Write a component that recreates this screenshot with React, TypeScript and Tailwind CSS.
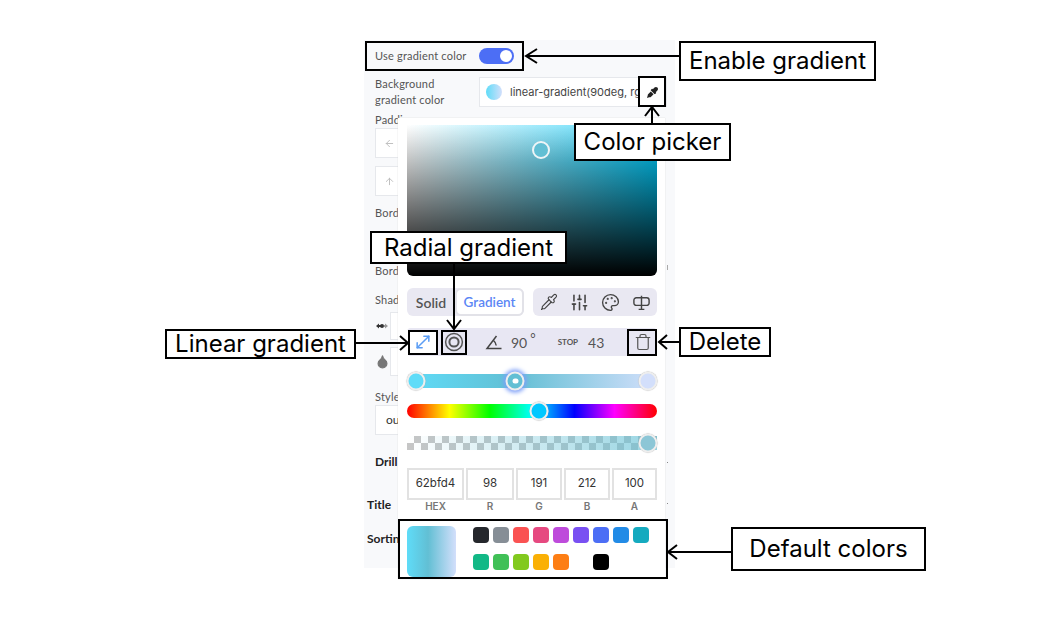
import { MoveDiagonal, Pipette, SlidersVertical, Palette, Trash, Droplet, ArrowLeft, ArrowUp } from 'lucide-react';
import { FaEyeDropper } from 'react-icons/fa';

const swatches = [
  '#25272c', '#868e96', '#fa5252', '#e64980', '#be4bdb', '#7950f2', '#4c6ef5', '#228be6', '#15aabf',
  '#12b886', '#40c057', '#82c91e', '#fab005', '#fd7e14', '#ffffff', '#000000',
];

const fields = [
  { label: 'HEX', value: '62bfd4', width: 'w-[57px]' },
  { label: 'R', value: '98', width: 'w-[48px]' },
  { label: 'G', value: '191', width: 'w-[46px]' },
  { label: 'B', value: '212', width: 'w-[46px]' },
  { label: 'A', value: '100', width: 'w-[45px]' },
];

function RadialIcon() {
  return (
    <svg width="20" height="20" viewBox="0 0 20 20" fill="none" stroke="#555">
      <circle cx="10" cy="10" r="8.4" strokeWidth="1.5" />
      <circle cx="10" cy="10" r="4.6" strokeWidth="2" />
    </svg>
  );
}

function AngleIcon() {
  return (
    <svg width="18" height="18" viewBox="0 0 18 18" fill="none" stroke="#444" strokeWidth="1.5" className="ml-[10px]">
      <path d="M16.500 15.500H2L11.500 3" />
      <path d="M8.500 7.500c1.600 1.300 2.500 3 2.700 5" />
    </svg>
  );
}

function BalanceIcon() {
  return (
    <svg width="19" height="19" viewBox="0 0 20 20" fill="none" stroke="#444" strokeWidth="1.5" strokeLinejoin="round">
      <path d="M10 3v14M7 17.200h6" />
      <path d="M10 5H4.500A2.500 2.500 0 0 0 2 7.500v3A2.500 2.500 0 0 0 4.500 13H10" />
      <path d="M10 5h5.500A2.500 2.500 0 0 1 18 7.500v3a2.500 2.500 0 0 1-2.500 2.500H10" />
    </svg>
  );
}

function ShadowIcon() {
  return (
    <svg width="12" height="8" viewBox="0 0 12 8">
      <path d="M0 4l3-2.500V3h3v2H3v1.500z" fill="#333" />
      <circle cx="6" cy="4" r="2" fill="#333" />
      <path d="M8 3h1V1.500L12 4 9 6.500V5H8z" fill="#999" />
    </svg>
  );
}

function Thumb({ className, color, dot }: { className: string; color: string; dot?: boolean }) {
  return (
    <div
      className={`absolute top-1/2 flex h-[19px] w-[19px] -translate-x-1/2 -translate-y-1/2 items-center justify-center rounded-full border-2 border-[#eeeeee] shadow-[0_0_1px_#aaa] ${className}`}
      style={{ backgroundColor: color }}
    >
      {dot && <div className="h-[5px] w-[6px] rounded-full bg-white" />}
    </div>
  );
}

function PanelInput({ className, children }: { className: string; children?: React.ReactNode }) {
  return (
    <div className={`flex items-center border border-[#e6e8ec] bg-white ${className}`}>{children}</div>
  );
}

function Label({ className, children }: { className?: string; children: React.ReactNode }) {
  return <div className={`h-[14px] text-[11px] leading-[14px] tracking-[0.2px] text-[#555] ${className ?? ''}`}>{children}</div>;
}

function ColorPopover() {
  return (
    <div className="absolute left-[34px] top-[78px] h-[461px] w-[267px] bg-white pl-[9px] pr-[8px] pt-[7px] shadow-[0_0_1px_#ccc]">
      {/* saturation area */}
      <div className="relative h-[151px] rounded-b-md bg-[linear-gradient(to_bottom,transparent,#000),linear-gradient(to_bottom,rgba(255,255,255,0.3),transparent_25%),linear-gradient(to_right,#fff,#00c8f8)]">
        <div className="absolute left-[125px] top-[16px] h-[18px] w-[18px] rounded-full border-2 border-[#eef5f7] bg-[#62bfd4]" />
      </div>

      {/* mode tabs and tools */}
      <div className="mt-[12px] flex h-[28px] justify-between">
        <div className="flex w-[117px] rounded-md bg-[#e9e8f2]">
          <div className="flex w-[48px] items-center justify-center text-[14px] font-semibold text-[#555]">Solid</div>
          <div className="flex flex-1 items-center justify-center rounded-md border-2 border-[#e2e2e8] bg-white text-[13.5px] font-semibold text-[#5b86f5]">
            Gradient
          </div>
        </div>
        <div className="grid w-[124px] grid-cols-4 place-items-center rounded-md bg-[#e9e8f2] text-[#444]">
          <Pipette size={18} strokeWidth={1.5} />
          <SlidersVertical size={19} strokeWidth={2} />
          <Palette size={19} strokeWidth={1.7} />
          <BalanceIcon />
        </div>
      </div>

      {/* gradient options */}
      <div className="mt-[12px] flex h-[28px] items-center rounded-sm bg-[#e8e7f3] text-[#555]">
        <div className="flex h-[25px] w-[31px] items-center justify-center bg-white text-[#5b9df5]">
          <MoveDiagonal size={20} strokeWidth={1.8} />
        </div>
        <div className="flex w-[31px] justify-center">
          <RadialIcon />
        </div>
        <div className="ml-[6px]">
          <AngleIcon />
        </div>
        <span className="ml-[8px] text-[14px]">90</span>
        <span className="ml-[3px] -mt-[6px] text-[13px]">°</span>
        <span className="ml-[22px] text-[8px] font-bold">STOP</span>
        <span className="ml-[10px] text-[14px]">43</span>
        <div className="ml-[29px] flex w-[20px] justify-center">
          <Trash size={18} strokeWidth={1.6} />
        </div>
      </div>

      {/* gradient stops */}
      <div className="relative mt-[18px] h-[14px] rounded-full bg-[linear-gradient(to_right,#5fdcf8,#62bfd4_43%,#d3dffb)]">
        <Thumb className="left-[9px]" color="#5fdcf8" />
        <Thumb className="left-[108px] shadow-[0_0_4px_2px_#7ea0f8]" color="#62bfd4" dot />
        <Thumb className="left-[241px]" color="#d3dffb" />
      </div>

      {/* hue */}
      <div className="relative mt-[16px] h-[14px] rounded-full bg-[linear-gradient(to_right,#f00,#ff0_17%,#0f0_33%,#0ff_50%,#00f_67%,#f0f_83%,#f00)]">
        <Thumb className="left-[132px]" color="#00c8ff" />
      </div>

      {/* alpha */}
      <div className="relative mt-[18px] h-[14px] rounded-full">
        <div className="h-full bg-[repeating-conic-gradient(#c6c6c6_0_25%,#ffffff_0_50%)] bg-[length:14px_14px]">
          <div className="h-full bg-[linear-gradient(to_right,transparent,rgba(98,191,212,0.65))]" />
        </div>
        <Thumb className="left-[241px]" color="#8cc6d6" />
      </div>

      {/* color fields */}
      <div className="mt-[18px] flex gap-[2px] font-['Inter',sans-serif]">
        {fields.map((f) => (
          <div key={f.label} className={f.width}>
            <div className="flex h-[32px] items-center justify-center border-2 border-[#e2e2e2] text-[11.5px] text-[#333]">
              {f.value}
            </div>
            <div className="text-center text-[10px] font-semibold leading-[13px] text-[#777]">{f.label}</div>
          </div>
        ))}
      </div>

      {/* current gradient and default colors */}
      <div className="mt-[13px] flex">
        <div className="h-[51px] w-[49px] rounded-md bg-[linear-gradient(to_right,#5fdcf8,#62bfd4_43%,#d3dffb)]" />
        <div className="ml-[17px] grid h-[43px] grid-cols-[repeat(9,16px)] gap-x-[4px] gap-y-[11px] pt-px">
          {swatches.map((c) => (
            <div key={c} className="h-[16px] w-[16px] rounded-[4px]" style={{ backgroundColor: c }} />
          ))}
        </div>
      </div>
    </div>
  );
}

function SettingsPanel() {
  return (
    <div className="relative h-[528px] w-[311px] bg-[#f8f9fb] pl-[11px] font-['Lato',sans-serif]">
      <div className="flex h-[32px] items-center">
        <span className="w-[104px] text-[11px] tracking-[0.2px] text-[#555]">Use gradient color</span>
        <div className="flex h-[16px] w-[35px] items-center justify-end rounded-full bg-[#4c6ef5] pr-[2px]">
          <div className="h-[12px] w-[12px] rounded-full bg-white" />
        </div>
      </div>

      <div className="mt-[5px] flex h-[30px] items-center">
        <div className="w-[104px] text-[11px] leading-[16px] tracking-[0.2px] text-[#555]">
          Background
          <br />
          gradient color
        </div>
        <PanelInput className="h-[30px] w-[188px] pl-[6px]">
          <div className="h-[16px] w-[16px] shrink-0 rounded-full bg-[linear-gradient(to_right,#5fdcf8,#d3dffb)]" />
          <span className="ml-[8px] w-[128px] overflow-hidden whitespace-pre font-['Inter',sans-serif] text-[11px] text-[#444]">
            linear-gradient(90deg, rgba(95,220,248,1)
          </span>
          <FaEyeDropper size={11} className="ml-[9px] text-[#222]" />
        </PanelInput>
      </div>

      <Label className="mt-[6px]">Padding</Label>
      <PanelInput className="mt-px h-[30px] w-[40px] pl-[8px] text-[#bbb]">
        <ArrowLeft size={11} />
      </PanelInput>
      <PanelInput className="mt-[8px] h-[30px] w-[40px] pl-[8px] text-[#bbb]">
        <ArrowUp size={11} />
      </PanelInput>

      <Label className="mt-[10px]">Border</Label>
      <Label className="mt-[44px]">Border</Label>
      <Label className="mt-[15px]">Shadow</Label>

      <div className="mt-[5px] flex h-[28px] items-center">
        <div className="w-[15px] pl-px">
          <ShadowIcon />
        </div>
        <PanelInput className="h-[28px] w-[40px]" />
      </div>
      <div className="mt-[7px] flex h-[29px] items-center">
        <div className="w-[15px]">
          <Droplet size={15} fill="#777" stroke="#777" />
        </div>
        <PanelInput className="h-[29px] w-[40px]" />
      </div>

      <Label className="mt-[14px]">Style</Label>
      <PanelInput className="mt-px h-[30px] w-[40px] pl-[10px] text-[12px] text-[#333]">ou</PanelInput>

      <div className="mt-[19px] h-[16px] text-[12px] font-bold leading-[16px] text-[#222]">Drill</div>
      <div className="-ml-[8px] mt-[27px] h-[16px] text-[12px] font-bold leading-[16px] text-[#222]">Title</div>
      <div className="-ml-[8px] mt-[18px] h-[16px] text-[12px] font-bold leading-[16px] text-[#222]">Sorting</div>

      <ColorPopover />

      {/* bits of cut off controls to the right of the popover */}
      <div className="absolute left-[303px] top-[225px] h-[5px] w-px bg-[#aaa]" />
      <div className="absolute left-[303px] top-[422px] h-px w-px bg-[#888]" />
      <div className="absolute left-[303px] top-[463px] h-px w-px bg-[#888]" />
    </div>
  );
}

// arrows and boxes that annotate the screenshot
function Callout({ className, children }: { className: string; children: React.ReactNode }) {
  return (
    <div
      className={`absolute flex items-center justify-center border-2 border-black bg-white font-['Inter',sans-serif] text-[24px] leading-none text-black ${className}`}
    >
      {children}
    </div>
  );
}

function Arrows() {
  return (
    <svg width="1040" height="620" viewBox="0 0 1040 620" fill="none" stroke="#000" strokeWidth="2" className="pointer-events-none absolute left-0 top-0">
      <path d="M679 56H526M537 49l-11 7 11 7" />
      <path d="M652 123V108M645 116l7-9 7 9" />
      <path d="M454 264V329M447 320l7 9 7-9" />
      <path d="M355 343H408M400 336l8 7-8 7" />
      <path d="M679 342H659M667 335l-8 7 8 7" />
      <path d="M731 552H668M677 545l-9 7 9 7" />
    </svg>
  );
}

export default function App() {
  return (
    <div className="relative h-[620px] w-[1040px] overflow-hidden bg-white pl-[364px] pt-[40px]">
      <SettingsPanel />
      <Arrows />

      {/* outlines over the ui */}
      <div className="absolute left-[365px] top-[41px] h-[30px] w-[159px] border-2 border-black" />
      <div className="absolute left-[638px] top-[76px] h-[31px] w-[28px] border-2 border-black" />
      <div className="absolute left-[408px] top-[330px] h-[25px] w-[30px] border-2 border-black" />
      <div className="absolute left-[441px] top-[330px] h-[25px] w-[26px] border-2 border-black" />
      <div className="absolute left-[627px] top-[329px] h-[27px] w-[30px] border-2 border-black" />
      <div className="absolute left-[398px] top-[519px] h-[60px] w-[270px] border-2 border-black" />

      <Callout className="left-[679px] top-[41px] h-[40px] w-[197px]">Enable gradient</Callout>
      <Callout className="left-[574px] top-[123px] h-[38px] w-[157px]">Color picker</Callout>
      <Callout className="left-[370px] top-[231px] h-[33px] w-[197px]">Radial gradient</Callout>
      <Callout className="left-[165px] top-[329px] h-[30px] w-[191px]">Linear gradient</Callout>
      <Callout className="left-[679px] top-[327px] h-[30px] w-[92px]">Delete</Callout>
      <Callout className="left-[731px] top-[527px] h-[44px] w-[195px]">Default colors</Callout>
    </div>
  );
}
